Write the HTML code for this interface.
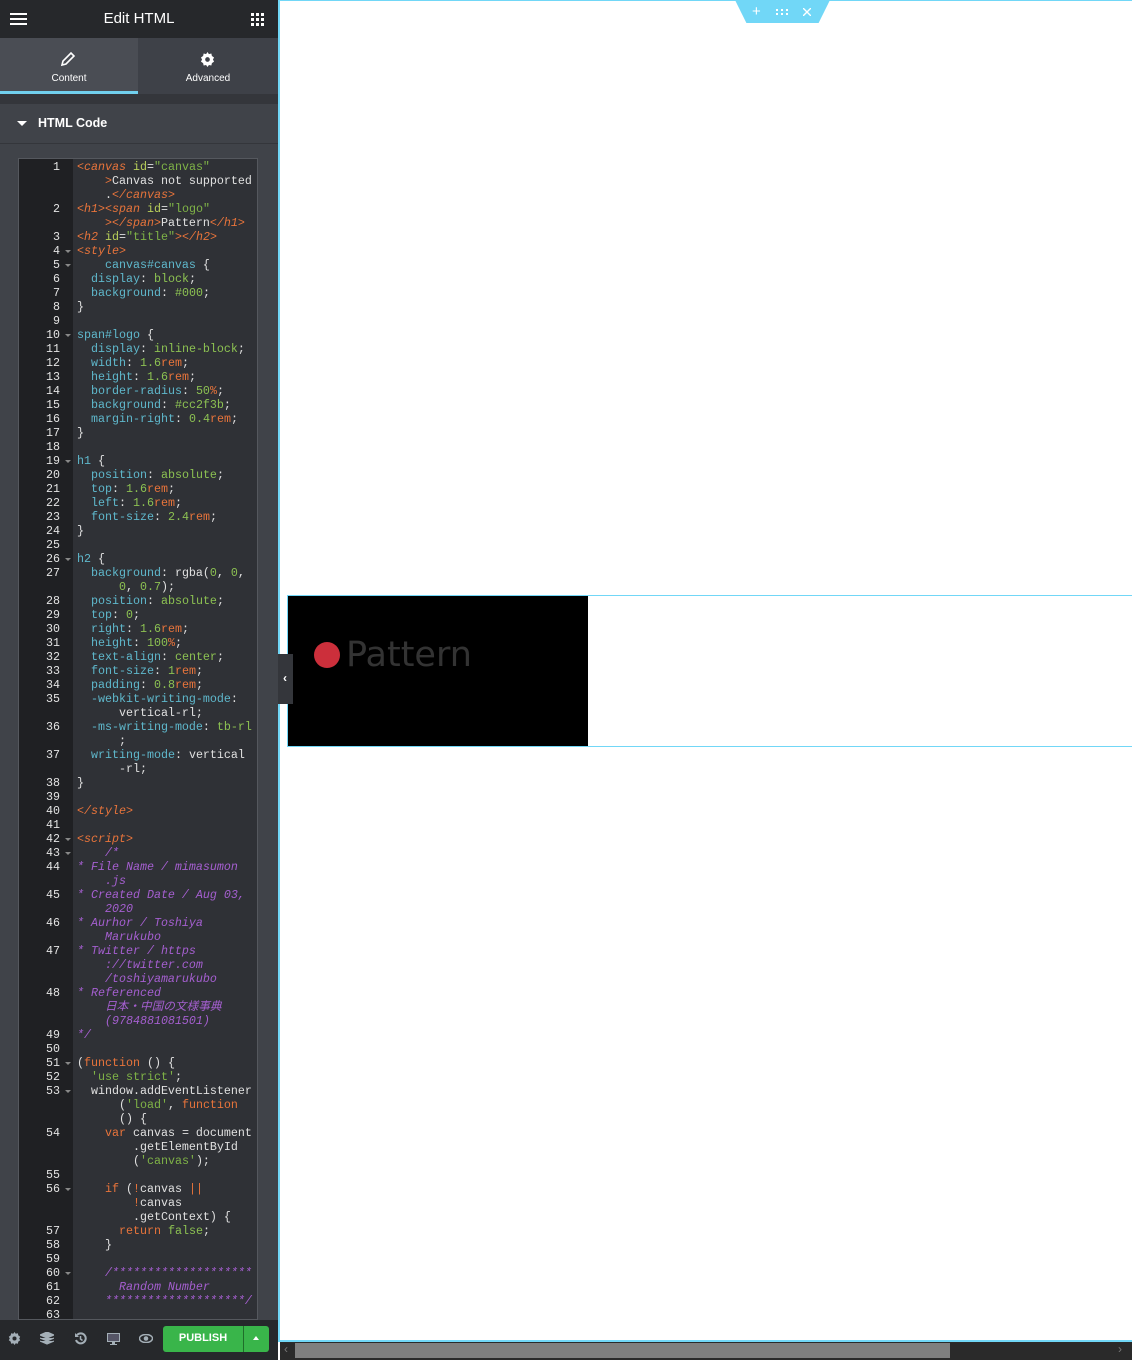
<!DOCTYPE html>
<html><head><meta charset="utf-8"><style>
*{margin:0;padding:0;box-sizing:border-box}
body{width:1132px;height:1360px;overflow:hidden;background:#fff;font-family:"Liberation Sans",sans-serif;position:relative}
.a{position:absolute}
pre{font-family:"Liberation Mono","Noto Sans CJK JP",monospace;font-size:11.67px;line-height:14px;margin:0}
.t{color:#e8743b;font-style:italic}.at{color:#b8cf5a}.s{color:#7fb347}.p{color:#5fb8cc}.v{color:#8cc152}.u{color:#e8743b}.c{color:#a55fd0;font-style:italic}.k{color:#e8743b}.d{color:#e0e0e0}
.f{position:absolute;left:46px;width:0;height:0;border-left:3px solid transparent;border-right:3px solid transparent;border-top:3px solid #888}
</style></head><body>
<div class="a" style="left:0;top:0;width:278px;height:1360px;background:#404349"></div>
<div class="a" style="left:0;top:0;width:278px;height:38px;background:#26282b"></div>
<div class="a" style="left:10px;top:13px;width:17px;height:2px;background:#fff;box-shadow:0 5px 0 #fff,0 10px 0 #fff"></div>
<div class="a" style="left:0;top:10px;width:278px;text-align:center;color:#fff;font-size:15px">Edit HTML</div>
<svg class="a" style="left:251px;top:13px" width="13" height="13"><g fill="#fff"><rect x="0" y="0" width="3" height="3"/><rect x="5" y="0" width="3" height="3"/><rect x="10" y="0" width="3" height="3"/><rect x="0" y="5" width="3" height="3"/><rect x="5" y="5" width="3" height="3"/><rect x="10" y="5" width="3" height="3"/><rect x="0" y="10" width="3" height="3"/><rect x="5" y="10" width="3" height="3"/><rect x="10" y="10" width="3" height="3"/></g></svg>
<div class="a" style="left:0;top:38px;width:138px;height:53px;background:#4a4d54"></div>
<div class="a" style="left:138px;top:38px;width:140px;height:56px;background:#3e4148"></div>
<div class="a" style="left:0;top:91px;width:138px;height:3px;background:#71d0ee"></div>
<svg class="a" style="left:60px;top:51px" width="16" height="16"><path d="M2 14l1-4 8-8 3 3-8 8z" fill="none" stroke="#fff" stroke-width="1.6"/></svg>
<div class="a" style="left:0;top:73px;width:138px;text-align:center;color:#fff;font-size:10px">Content</div>
<svg class="a" style="left:200px;top:52px" width="15" height="15" viewBox="0 0 16 16"><path d="M8 0l1.5 2.2 2.6-.6.6 2.6L15 5.8 13.8 8 15 10.2l-2.3 1.6-.6 2.6-2.6-.6L8 16l-1.5-2.2-2.6.6-.6-2.6L1 10.2 2.2 8 1 5.8l2.3-1.6.6-2.6 2.6.6z" fill="#fff"/><circle cx="8" cy="8" r="2.5" fill="#3e4148"/></svg>
<div class="a" style="left:138px;top:73px;width:140px;text-align:center;color:#fff;font-size:10px">Advanced</div>
<div class="a" style="left:0;top:94px;width:278px;height:10px;background:#34363b"></div>
<div class="a" style="left:0;top:143px;width:278px;height:1px;background:#34363b"></div>
<div class="a" style="left:17px;top:121px;width:0;height:0;border-left:5px solid transparent;border-right:5px solid transparent;border-top:5px solid #fff"></div>
<div class="a" style="left:38px;top:116px;color:#fff;font-size:12.5px;font-weight:bold">HTML Code</div>
<div class="a" style="left:18px;top:158px;width:240px;height:1162px;background:#2f3136;border:1px solid #55585e;overflow:hidden">
<div class="a" style="left:0;top:0;width:54px;height:1162px;background:#1f2023"></div>
<pre class="a" style="left:0;top:1px;width:41px;text-align:right;color:#e4e4e4">1


2

3
4
5
6
7
8
9
10
11
12
13
14
15
16
17
18
19
20
21
22
23
24
25
26
27

28
29
30
31
32
33
34
35

36

37

38
39
40
41
42
43
44

45

46

47


48


49
50
51
52
53


54


55
56


57
58
59
60
61
62
63</pre>
<div class="f" style="top:91px"></div><div class="f" style="top:105px"></div><div class="f" style="top:175px"></div><div class="f" style="top:301px"></div><div class="f" style="top:399px"></div><div class="f" style="top:679px"></div><div class="f" style="top:693px"></div><div class="f" style="top:903px"></div><div class="f" style="top:931px"></div><div class="f" style="top:1029px"></div><div class="f" style="top:1113px"></div>
<pre class="a d" style="left:58px;top:1px;color:#e0e0e0"><span class="t">&lt;canvas</span> <span class="at">id</span>=<span class="s">"canvas"</span>
    <span class="t">&gt;</span>Canvas not supported
    .<span class="t">&lt;/canvas&gt;</span>
<span class="t">&lt;h1&gt;&lt;span</span> <span class="at">id</span>=<span class="s">"logo"</span>
    <span class="t">&gt;&lt;/span&gt;</span>Pattern<span class="t">&lt;/h1&gt;</span>
<span class="t">&lt;h2</span> <span class="at">id</span>=<span class="s">"title"</span><span class="t">&gt;&lt;/h2&gt;</span>
<span class="t">&lt;style&gt;</span>
    <span class="p">canvas#canvas</span> {
  <span class="p">display</span>: <span class="v">block</span>;
  <span class="p">background</span>: <span class="v">#000</span>;
}

<span class="p">span#logo</span> {
  <span class="p">display</span>: <span class="v">inline-block</span>;
  <span class="p">width</span>: <span class="v">1.6</span><span class="u">rem</span>;
  <span class="p">height</span>: <span class="v">1.6</span><span class="u">rem</span>;
  <span class="p">border-radius</span>: <span class="v">50</span><span class="u">%</span>;
  <span class="p">background</span>: <span class="v">#cc2f3b</span>;
  <span class="p">margin-right</span>: <span class="v">0.4</span><span class="u">rem</span>;
}

<span class="p">h1</span> {
  <span class="p">position</span>: <span class="v">absolute</span>;
  <span class="p">top</span>: <span class="v">1.6</span><span class="u">rem</span>;
  <span class="p">left</span>: <span class="v">1.6</span><span class="u">rem</span>;
  <span class="p">font-size</span>: <span class="v">2.4</span><span class="u">rem</span>;
}

<span class="p">h2</span> {
  <span class="p">background</span>: rgba(<span class="v">0</span>, <span class="v">0</span>,
      <span class="v">0</span>, <span class="v">0.7</span>);
  <span class="p">position</span>: <span class="v">absolute</span>;
  <span class="p">top</span>: <span class="v">0</span>;
  <span class="p">right</span>: <span class="v">1.6</span><span class="u">rem</span>;
  <span class="p">height</span>: <span class="v">100</span><span class="u">%</span>;
  <span class="p">text-align</span>: <span class="v">center</span>;
  <span class="p">font-size</span>: <span class="v">1</span><span class="u">rem</span>;
  <span class="p">padding</span>: <span class="v">0.8</span><span class="u">rem</span>;
  <span class="p">-webkit-writing-mode</span>:
      vertical-rl;
  <span class="p">-ms-writing-mode</span>: <span class="v">tb-rl</span>
      ;
  <span class="p">writing-mode</span>: vertical
      -rl;
}

<span class="t">&lt;/style&gt;</span>

<span class="t">&lt;script&gt;</span>
<span class="c">    /*
* File Name / mimasumon
    .js
* Created Date / Aug 03,
    2020
* Aurhor / Toshiya
    Marukubo
* Twitter / https
    ://twitter.com
    /toshiyamarukubo
* Referenced
    日本・中国の文様事典
    (9784881081501)
*/</span>

(<span class="k">function</span> () {
  <span class="s">'use strict'</span>;
  window.addEventListener
      (<span class="s">'load'</span>, <span class="k">function</span>
      () {
    <span class="k">var</span> canvas = document
        .getElementById
        (<span class="s">'canvas'</span>);

    <span class="k">if</span> (<span class="k">!</span>canvas <span class="k">||</span>
        <span class="k">!</span>canvas
        .getContext) {
      <span class="k">return</span> <span class="v">false</span>;
    }

<span class="c">    /********************
      Random Number
    ********************/</span>
</pre>
</div>
<div class="a" style="left:0;top:1320px;width:278px;height:40px;background:#26282b"></div>
<svg class="a" style="left:8px;top:1332px" width="13" height="13" viewBox="0 0 16 16"><path d="M8 0l1.5 2.2 2.6-.6.6 2.6L15 5.8 13.8 8 15 10.2l-2.3 1.6-.6 2.6-2.6-.6L8 16l-1.5-2.2-2.6.6-.6-2.6L1 10.2 2.2 8 1 5.8l2.3-1.6.6-2.6 2.6.6z" fill="#a4afb7"/><circle cx="8" cy="8" r="2.5" fill="#26282b"/></svg>
<svg class="a" style="left:40px;top:1332px" width="14" height="13"><path d="M7 0l7 3-7 3-7-3z M0 6l7 3 7-3 M0 9l7 3 7-3" fill="#a4afb7" stroke="#a4afb7" stroke-width="1.2"/></svg>
<svg class="a" style="left:74px;top:1332px" width="13" height="13"><path d="M3 3a5 5 0 1 1-1 5" fill="none" stroke="#a4afb7" stroke-width="2"/><path d="M1 1v4h4z" fill="#a4afb7"/><path d="M6.5 4v3l2 1.5" fill="none" stroke="#a4afb7" stroke-width="1.5"/></svg>
<svg class="a" style="left:107px;top:1333px" width="13" height="12"><rect x="0.5" y="0.5" width="12" height="8" fill="#556" stroke="#a4afb7"/><rect x="5" y="9" width="3" height="2" fill="#a4afb7"/><rect x="3" y="11" width="7" height="1" fill="#a4afb7"/></svg>
<svg class="a" style="left:139px;top:1334px" width="14" height="9"><ellipse cx="7" cy="4.5" rx="6.5" ry="4" fill="none" stroke="#a4afb7" stroke-width="1.5"/><circle cx="7" cy="4.5" r="2.3" fill="#a4afb7"/></svg>
<div class="a" style="left:163px;top:1326px;width:106px;height:26px;background:#39b54a;border-radius:3px"></div>
<div class="a" style="left:243px;top:1326px;width:1px;height:26px;background:#1f6e2a"></div>
<div class="a" style="left:163px;top:1332px;width:80px;text-align:center;color:#fff;font-size:11px;font-weight:bold">PUBLISH</div>
<div class="a" style="left:253px;top:1336px;width:0;height:0;border-left:3.5px solid transparent;border-right:3.5px solid transparent;border-bottom:4px solid #fff"></div>
<div class="a" style="left:278px;top:0;width:2px;height:1342px;background:#71d7f7"></div>
<div class="a" style="left:278px;top:0;width:854px;height:1px;background:#71d7f7"></div>
<div class="a" style="left:278px;top:1340px;width:854px;height:2px;background:#71d7f7"></div>
<div class="a" style="left:280px;top:1342px;width:852px;height:18px;background:#2a2a2a"></div>
<div class="a" style="left:295px;top:1343px;width:655px;height:15px;background:#7f7f7f"></div>
<div class="a" style="left:284px;top:1342px;color:#777;font-size:12px">‹</div>
<div class="a" style="left:1118px;top:1342px;color:#777;font-size:12px">›</div>
<div class="a" style="left:735px;top:0;width:95px;height:23px;background:#71d7f7;clip-path:polygon(0 0,100% 0,88% 100%,12% 100%);border-radius:0 0 4px 4px"></div>
<div class="a" style="left:752px;top:3px;color:#fff;font-size:15px">+</div>
<svg class="a" style="left:776px;top:9px" width="14" height="6"><g fill="#fff"><rect x="0" y="0" width="2" height="2"/><rect x="5" y="0" width="2" height="2"/><rect x="10" y="0" width="2" height="2"/><rect x="0" y="4" width="2" height="2"/><rect x="5" y="4" width="2" height="2"/><rect x="10" y="4" width="2" height="2"/></g></svg>
<svg class="a" style="left:803px;top:8px" width="8" height="8"><path d="M0 0L8 8M8 0L0 8" stroke="#fff" stroke-width="1.4"/></svg>
<div class="a" style="left:288px;top:595px;width:844px;height:1px;background:#71d7f7"></div>
<div class="a" style="left:288px;top:746px;width:844px;height:1px;background:#71d7f7"></div>
<div class="a" style="left:287px;top:595px;width:1px;height:152px;background:#71d7f7"></div>
<div class="a" style="left:288px;top:596px;width:300px;height:150px;background:#000"></div>
<div class="a" style="left:314px;top:642px;width:26px;height:26px;border-radius:50%;background:#cc2f3b"></div>
<div class="a" style="left:346px;top:635px;color:#333;font-size:35px;font-family:'DejaVu Sans',sans-serif">Pattern</div>
<div class="a" style="left:278px;top:654px;width:15px;height:50px;background:#34363b"></div>
<div class="a" style="left:283px;top:671px;color:#fff;font-size:12px;font-weight:bold">‹</div>
</body></html>
